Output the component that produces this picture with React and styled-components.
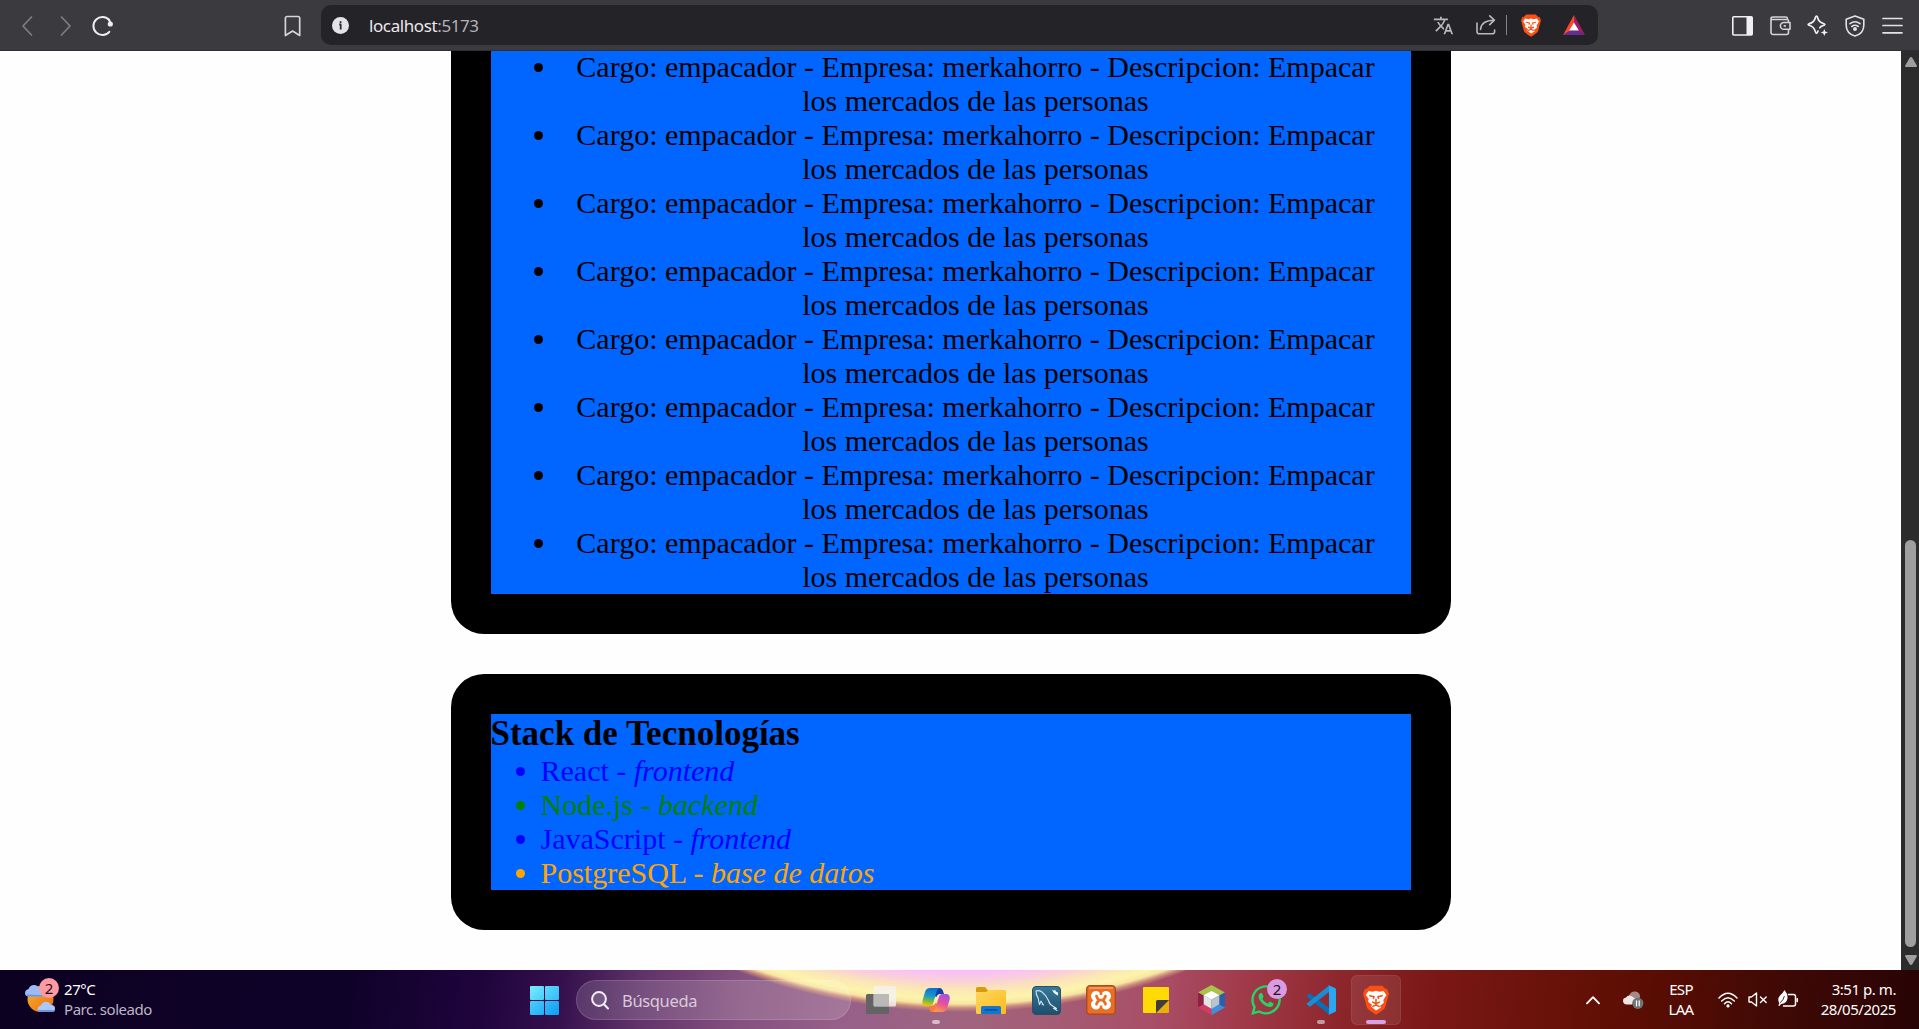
import React from "react";
import styled, { createGlobalStyle } from "styled-components";
import { FaWhatsapp } from "react-icons/fa";
import { MdTranslate } from "react-icons/md";

const uiFont = '"Noto Sans", "Open Sans", sans-serif';
const pageFont = '"Liberation Serif", "Times New Roman", serif';

const GlobalStyle = createGlobalStyle`
  * { box-sizing: border-box; }
  html, body { margin: 0; padding: 0; background: #fff; overflow: hidden; }
`;

const Screen = styled.div`
  display: flex;
  flex-direction: column;
  width: 1919px;
  height: 1029px;
  overflow: hidden;
`;

/* ---------- Browser toolbar ---------- */

const Toolbar = styled.header`
  display: flex;
  align-items: flex-start;
  flex: none;
  height: 51px;
  background: #3b3a3f;
  border-bottom: 1px solid #2f2e32;
  font-family: ${uiFont};
`;

const NavGroup = styled.nav`
  display: flex;
  align-items: center;
  width: 321px;
  height: 51px;
  padding-left: 19px;
`;

const NavSlot = styled.span`
  display: flex;
  width: ${(p) => p.$w}px;
`;

const Icon = styled.svg`
  display: block;
  flex: none;
  width: ${(p) => p.$w}px;
  height: ${(p) => p.$h}px;
  overflow: visible;
  fill: ${(p) => p.$fill || "none"};
  stroke: ${(p) => p.$stroke || "none"};
  stroke-width: ${(p) => p.$sw || 1.5};
  stroke-linecap: round;
  stroke-linejoin: round;
`;

const AddressBar = styled.div`
  display: flex;
  align-items: center;
  width: 1277px;
  height: 40px;
  margin-top: 5px;
  padding: 0 13px 0 11px;
  border-radius: 10px;
  background: #242328;
`;

const Url = styled.span`
  flex: 1;
  margin-left: 20px;
  color: #e9e8ec;
  font-size: 17px;
  line-height: 39px;
  letter-spacing: -0.4px;
`;

const Port = styled.span`
  color: #b3b2b8;
`;

const AddressActions = styled.div`
  display: flex;
  align-items: center;
  color: #b9b8bd;
`;

const Divider = styled.i`
  width: 1px;
  height: 20px;
  margin: 0 14px 0 10px;
  background: #85848a;
`;

const Gap = styled.span`
  width: ${(p) => p.$w}px;
`;

const ToolGroup = styled.div`
  display: flex;
  height: 51px;
  margin-left: 126px;
`;

const ToolCell = styled.span`
  display: flex;
  align-items: center;
  justify-content: center;
  width: 37.5px;
`;

/* ---------- Page ---------- */

const Viewport = styled.div`
  display: flex;
  flex: none;
  height: 919px;
  overflow: hidden;
`;

const Page = styled.main`
  display: flex;
  flex: 1;
  flex-direction: column;
  justify-content: flex-end;
  align-items: center;
  gap: 40px;
  padding-bottom: 40px;
  background: #fefefe;
  font-family: ${pageFont};
  font-size: 30px;
  line-height: 34px;
  color: #000;
`;

const Card = styled.section`
  flex: none;
  width: 1000px;
  border: 40px solid #000;
  border-radius: 33px;
  background: #0066ff;
`;

const List = styled.ul`
  margin: 0;
  padding: 0 0 0 50px;
  text-align: ${(p) => (p.$centered ? "center" : "left")};
`;

const Job = styled.li`
  margin: 0 18px;
`;

const Tech = styled.li`
  color: ${(p) => p.$color};
`;

const Heading = styled.h2`
  margin: 0;
  font-size: 35px;
  line-height: 40px;
  font-weight: bold;
`;

const ScrollTrack = styled.div`
  display: flex;
  flex-direction: column;
  align-items: center;
  width: 18px;
  padding: 6px 0 5px 1px;
  background: #2c2c2c;
`;

const ScrollThumb = styled.div`
  width: 11px;
  height: 407px;
  margin: auto 0 8px;
  border-radius: 6px;
  background: #9f9f9f;
`;

/* ---------- Taskbar ---------- */

const Taskbar = styled.footer`
  display: flex;
  align-items: center;
  flex: none;
  height: 59px;
  font-family: ${uiFont};
  color: #fff;
  background:
    radial-gradient(circle at 962px -595px,
      #f8bdfb 0, #f9c0f8 597px, #fad0d8 606px, #fbe5b8 614px, #fdf4ab 624px,
      #f8e5a2 629px, #c98a7c 633px, rgba(176, 104, 120, 0) 637px),
    linear-gradient(97deg,
      #0d0122 0, #0f0229 350px, #1f043c 480px, #35104d 560px, #61336a 640px,
      #85517f 740px, #96608a 840px, #a0647f 960px, #a45c74 1050px, #a94e68 1150px,
      #a03a49 1240px, #8e272d 1330px, #7c1817 1420px, #6c130c 1520px,
      #5a0d02 1640px, #430a05 1750px, #310505 1860px, #240305 1925px);
`;

const Weather = styled.div`
  display: flex;
  align-items: center;
  width: 530px;
  padding-left: 25px;
`;

const WeatherArt = styled.div`
  position: relative;
  width: 39px;
  height: 36px;
  margin-bottom: 8px;
`;

const Badge = styled.span`
  position: absolute;
  top: ${(p) => p.$top}px;
  left: ${(p) => p.$left}px;
  width: 20px;
  height: 20px;
  border-radius: 50%;
  background: ${(p) => p.$bg};
  color: #1c1014;
  font-size: 15px;
  line-height: 20px;
  text-align: center;
`;

const Stack = styled.div`
  display: flex;
  flex-direction: column;
  align-items: ${(p) => p.$align || "flex-start"};
  width: ${(p) => (p.$w ? `${p.$w}px` : "auto")};
  margin-bottom: 2px;
  font-size: 15px;
  line-height: 20px;
  letter-spacing: ${(p) => p.$ls || -0.45}px;
  white-space: nowrap;
`;

const Muted = styled.span`
  color: #bdb6c6;
`;

const StartButton = styled.span`
  display: grid;
  grid-template-columns: 14px 14px;
  gap: 1px;
  margin: 2px 17px 0 0;
`;

const Pane = styled.i`
  height: 14px;
  border-radius: 1px;
  background: linear-gradient(135deg, ${(p) => p.$from}, ${(p) => p.$to});
`;

const Search = styled.div`
  display: flex;
  align-items: center;
  width: 275px;
  height: 40px;
  margin-top: 1px;
  padding-left: 14px;
  gap: 13px;
  border: 1px solid rgba(255, 255, 255, 0.14);
  border-radius: 20px;
  background: rgba(255, 255, 255, 0.14);
  color: #d9cadb;
  font-size: 16.5px;
  letter-spacing: -0.35px;
`;

const Apps = styled.div`
  display: flex;
  gap: 5px;
  margin-left: 5px;
`;

const AppButton = styled.div`
  position: relative;
  display: flex;
  align-items: center;
  justify-content: center;
  width: 50px;
  height: 50px;
  margin-top: 1px;
  border-radius: 6px;
  background: ${(p) => (p.$active ? "rgba(255,255,255,0.09)" : "transparent")};
  box-shadow: ${(p) => (p.$active ? "inset 0 0 0 1px rgba(255,255,255,0.07)" : "none")};
`;

const Indicator = styled.i`
  position: absolute;
  bottom: 1px;
  left: ${(p) => 25 - p.$w / 2}px;
  width: ${(p) => p.$w}px;
  height: 4px;
  border-radius: 2px;
  background: ${(p) => p.$bg};
`;

const Tray = styled.div`
  display: flex;
  align-items: center;
  flex: 1;
  padding-left: 185px;
`;

const WhatsApp = styled(FaWhatsapp)`
  width: 34px;
  height: 34px;
  color: #25d366;
`;

const Translate = styled(MdTranslate)`
  width: 21px;
  height: 21px;
  margin-right: 22px;
`;

function Lion({ w, h }) {
  return (
    <Icon $w={w} $h={h} viewBox="0 0 20 24" preserveAspectRatio="none">
      <path fill="#fb4f14" d="M5.2.6h9.6l2.4 2.4 1.2-.1L20 6.8l-.7 2.3L17 18Q16.5 19.5 10 23.8 3.5 19.5 3 18L.7 9.1 0 6.8l1.6-3.9 1.2.1z" />
      <path fill="#fff" d="M4.2 4.7l3.2.7 2.6-.8 2.6.8 3.2-.7 2.2 3.2-2.4 4 .5 2.2-3.2 2.6 1 1.2L10 20.4l-3.9-3.2 1-1.2-3.2-2.6.5-2.2L2.2 7.9z" />
      <path stroke="#fb4f14" strokeWidth="1.2" d="M5.2 8.6l3.3.8-.4 1.3M14.8 8.6l-3.3.8.4 1.3M10 11.4v2.6M7.4 13.7L10 15l2.6-1.3M7.6 17.1L10 16l2.4 1.1" />
    </Icon>
  );
}

const jobs = Array.from({ length: 8 }, () => ({
  cargo: "empacador",
  empresa: "merkahorro",
  descripcion: "Empacar los mercados de las personas",
}));

const techs = [
  { name: "React", kind: "frontend", color: "blue" },
  { name: "Node.js", kind: "backend", color: "green" },
  { name: "JavaScript", kind: "frontend", color: "blue" },
  { name: "PostgreSQL", kind: "base de datos", color: "orange" },
];

function BrowserToolbar() {
  return (
    <Toolbar>
      <NavGroup>
        <NavSlot $w={40}>
          <Icon $w={16} $h={20} viewBox="0 0 16 20" $stroke="#7f7e83" $sw={1.7}><path d="M12.5 1L4 10l8.500 9" /></Icon>
        </NavSlot>
        <NavSlot $w={33}>
          <Icon $w={16} $h={20} viewBox="0 0 16 20" $stroke="#7f7e83" $sw={1.7}><path d="M2.5 1L11 10l-8.500 9" /></Icon>
        </NavSlot>
        <NavSlot $w={192}>
          <Icon $w={22} $h={22} viewBox="0 0 22 22" $stroke="#ededf0" $sw={2}>
            <path d="M17.3 16.8A9 9 0 1 1 17.3 5.2" />
            <circle cx="18.3" cy="9" r="2.6" fill="#ededf0" stroke="none" />
            <path d="M16.5 4.3l1.8 3" />
          </Icon>
        </NavSlot>
        <Icon $w={17} $h={22} viewBox="0 0 17 22" $stroke="#d5d4d8" $sw={1.7}><path d="M3 1.5h11a1.7 1.7 0 0 1 1.7 1.7v17.3L8.600 16l-7.200 4.500V3.200A1.700 1.700 0 0 1 3 1.500z" /></Icon>
      </NavGroup>
      <AddressBar>
        <Icon $w={17} $h={17} viewBox="0 0 17 17">
          <circle cx="8.5" cy="8.5" r="8.5" fill="#e4e3e8" />
          <path stroke="#2b2a2f" strokeWidth="1.8" strokeLinecap="butt" d="M7.2 7.4h1.500v5M8.600 4.200v1.900" />
        </Icon>
        <Url>localhost<Port>:5173</Port></Url>
        <AddressActions>
          <Translate />
          <Icon $w={20} $h={20} viewBox="0 0 20 20" $stroke="#b9b8bd" $sw={1.6}>
            <path d="M1 8v8.500A2.300 2.300 0 0 0 3.300 18.800h13a2.300 2.300 0 0 0 2.300-2.300V15M4.500 14.500C5 8 9.500 5.200 18 5.200M13.700.8L18.400 5.200l-4.700 4.400" />
          </Icon>
          <Divider />
          <Lion w={20} h={23} />
          <Gap $w={22} />
          <Icon $w={22} $h={20} viewBox="0 0 22 20">
            <path fill="#ff4724" d="M11 0L0 20l7-4 4-8z" />
            <path fill="#9e1f63" d="M11 0l11 20-7-4-4-8z" />
            <path fill="#662d91" d="M0 20h22l-7-4.5H7z" />
            <path fill="#fff" d="M11 7.6l4.800 8H6.200z" />
          </Icon>
        </AddressActions>
      </AddressBar>
      <ToolGroup>
        <ToolCell>
          <Icon $w={21} $h={20} viewBox="0 0 21 20"><rect x=".8" y=".8" width="19.4" height="18.2" rx="1" stroke="#f0eff2" strokeWidth="1.6" /><path fill="#f0eff2" d="M14.500 1H20v18h-5.500z" /></Icon>
        </ToolCell>
        <ToolCell>
          <Icon $w={21} $h={20} viewBox="0 0 21 20" $stroke="#d5d4d8" $sw={1.6}>
            <path d="M18.500 5.500V4.800A1.500 1.500 0 0 0 17 3.500H2.500Q1 3.500 1 2.500 1 1 3 1h12.500q1.800 0 2 1.500M1 2.500v14A2.200 2.200 0 0 0 3.200 18.500H16.500a2 2 0 0 0 2-2V14M20 6.500h-6.200a3.400 3.400 0 0 0 0 6.800H20zM14.300 9.900h1" />
          </Icon>
        </ToolCell>
        <ToolCell>
          <Icon $w={21} $h={21} viewBox="0 0 21 21" $stroke="#f0eff2" $sw={1.7}>
            <path d="M9.500 1Q10.300 1 10.600 2.500 11.500 7.200 17 8.800q1.700.7 0 1.500-3 .8-4.200 2.400M9.500 1Q8.800 1 8.400 2.500 7.300 7.500 2 8.800q-1.700.7 0 1.500 5 1.400 6.400 6.500.4 1.500 1.100 1.500.9 0 1.500-2.300" />
            <path fill="#f0eff2" stroke="none" d="M17.300 14l1 2.500 2.700 1-2.700 1-1 2.500-1-2.500-2.600-1 2.600-1z" />
          </Icon>
        </ToolCell>
        <ToolCell>
          <Icon $w={20} $h={22} viewBox="0 0 20 22" $stroke="#e3e2e6" $sw={1.6}>
            <path d="M10 1l8.800 3.200v6C18.800 16 15 19.500 10 21 5 19.500 1.200 16 1.200 10.200v-6zM5 8.700q5-3.800 10 0M6.800 11.500q3.200-2.400 6.400 0" />
            <circle cx="10" cy="14" r="1.200" fill="#e3e2e6" />
          </Icon>
        </ToolCell>
        <ToolCell>
          <Icon $w={21} $h={17} viewBox="0 0 21 17" $stroke="#e3e2e6" $sw={1.7}><path d="M1 1.500h19M1 8.500h19M1 15.800h19" /></Icon>
        </ToolCell>
      </ToolGroup>
    </Toolbar>
  );
}

function TaskbarApps() {
  return (
    <Apps>
      <AppButton>
        <Icon $w={30} $h={28} viewBox="0 0 30 28">
          <rect x="0" y="8" width="23" height="20" rx="1.5" fill="#636363" />
          <rect x="7.5" y="0" width="22.5" height="20.5" rx="1.5" fill="#f4f2ee" fillOpacity=".82" />
          <path d="M7.500 8H23v12.500H7.500z" fill="#a5a5a5" fillOpacity=".6" />
        </Icon>
      </AppButton>
      <AppButton>
        <Icon $w={28} $h={26} viewBox="0 0 28 26">
          <defs>
            <linearGradient id="cpA" x1=".5" y1="0" x2=".3" y2="1"><stop offset="0" stopColor="#0f6fd0" /><stop offset=".45" stopColor="#199ac9" /><stop offset=".7" stopColor="#6cb84a" /><stop offset="1" stopColor="#f5c400" /></linearGradient>
            <linearGradient id="cpB" x1=".7" y1="0" x2=".3" y2="1"><stop offset="0" stopColor="#a64fe6" /><stop offset=".5" stopColor="#e8509a" /><stop offset="1" stopColor="#fd9a4a" /></linearGradient>
          </defs>
          <path fill="#123fae" d="M13 1h5q2 0 2.800 2.500L22 7h-4q-2.500 0-3.500 3L12 9z" />
          <path fill="#f9793e" d="M15 25h-5q-2 0-2.600-2.500L7 19h3q2.500 0 3.500-3l3 1z" />
          <path fill="url(#cpA)" d="M8 1h10q-2.500.5-3.500 4l-3 10q-1 4-4 4H4q-4.500 0-3.500-5.500L3 5Q4.200 1 8 1z" />
          <path fill="url(#cpB)" d="M20 25H10q2.500-.5 3.500-4l3-10q1-4 4-4H24q4.500 0 3.700 5.500L25 21q-1.200 4-5 4z" />
        </Icon>
        <Indicator $w={8} $bg="#d7b9ca" />
      </AppButton>
      <AppButton>
        <Icon $w={30} $h={27} viewBox="0 0 30 27">
          <defs><linearGradient id="fd" x1="0" y1="0" x2="1" y2="1"><stop offset="0" stopColor="#ffd75e" /><stop offset="1" stopColor="#fbbb1d" /></linearGradient></defs>
          <path fill="#d79b0b" d="M1.500 0H9l3 3.500V8H0V1.500Q0 0 1.500 0z" />
          <path fill="url(#fd)" d="M0 5h10l3-2h15.500Q30 3 30 4.500v21q0 1.500-1.500 1.500h-27Q0 27 0 25.500z" />
          <path fill="#1277d0" d="M5 27v-6.500q0-1.500 1.500-1.500h17q1.500 0 1.500 1.500V27z" />
          <path stroke="#0a4687" strokeWidth="1.3" d="M9 22.800h12" />
        </Icon>
      </AppButton>
      <AppButton>
        <Icon $w={29} $h={29} viewBox="0 0 29 29">
          <defs><linearGradient id="my" x1="0" y1="0" x2="0" y2="1"><stop offset="0" stopColor="#377999" /><stop offset="1" stopColor="#1e4d6c" /></linearGradient></defs>
          <rect x=".5" y=".5" width="28" height="28" rx="3.5" fill="url(#my)" stroke="#28506b" strokeWidth="1" />
          <path stroke="#d4e2ea" strokeWidth="1.1" d="M10 18l1.500 1M7.500 18.500Q6.500 15 6.300 12.500 3.800 8.500 4 5q3-1 6 1 4.500 3.500 6.500 8.500 1 4 3.500 5l4.500 3-3-.3 3.500 2.300M7.500 18.500L9 15l2.500 4" />
          <path fill="#eef5f8" d="M20 3.500l2 1.200 1-1.200.8 2 2.200 1V9.500l-2.500-1.300-2-1.800z" />
        </Icon>
      </AppButton>
      <AppButton>
        <Icon $w={30} $h={30} viewBox="0 0 30 30">
          <rect x=".7" y=".7" width="28.6" height="28.6" rx="3.5" fill="#eb6e22" stroke="#a94c20" strokeWidth="1.4" />
          <path fill="#f7a878" fillOpacity=".7" d="M3 2h24v2H3z" />
          <path stroke="#fff" strokeWidth="10" d="M10 11L20 19.500M20 11L10 19.500" />
          <path stroke="#eb6e22" strokeWidth="2.8" d="M10.500 11.200q1 3.300 3 4-2 .7-3 4M19.500 11.200q-1 3.300-3 4 2 .7 3 4M13 15.200h4" />
          <path fill="#eb6e22" d="M13.700 5h2.600v5h-2.600zM13.700 20.500h2.600v5h-2.600z" />
        </Icon>
      </AppButton>
      <AppButton>
        <Icon $w={26} $h={26} viewBox="0 0 26 26">
          <path fill="#ffdb05" d="M1 0h24q1 0 1 1v12L13 26H1q-1 0-1-1V1q0-1 1-1z" />
          <path fill="#e8ae09" d="M13 26L26 13v12q0 1-1 1z" />
          <path fill="#3d3d3d" d="M14.500 13H26L13 26V14.500q0-1.500 1.500-1.500z" />
        </Icon>
      </AppButton>
      <AppButton>
        <Icon $w={27} $h={30} viewBox="0 0 27 30">
          <path fill="#a9c24b" d="M13.500 0L27 7.500l-6.500 3.500-7-3.500-7 3.500L0 7.500z" />
          <path fill="#8e2047" d="M0 7.500L6.500 11v8L0 22.500z" />
          <path fill="#d43a66" d="M0 22.500L6.500 19l7 3.800V30z" />
          <path fill="#3f8fdc" d="M13.500 30v-7.200l7-3.800L27 22.500z" />
          <path fill="#2a5fae" d="M27 7.500v15L20.500 19v-8z" />
          <path fill="#fff" d="M13.500 6l7.800 4.300-7.800 4.500-7.800-4.500z" />
          <path fill="#dfe7e2" d="M5.700 10.300l7.800 4.500v9L5.700 19.300z" />
          <path fill="#b9c5cc" d="M21.300 10.300l-7.800 4.500v9l7.800-4.500z" />
        </Icon>
      </AppButton>
      <AppButton>
        <WhatsApp />
        <Badge $top={4} $left={26} $bg="#d99be3">2</Badge>
      </AppButton>
      <AppButton>
        <Icon $w={30} $h={30} viewBox="0 0 30 30">
          <path fill="#0b6fb8" d="M1 10.500l2-1.700q.7-.5 1.500 0L23 23v6.500L1 11.800q-.7-.7 0-1.300z" />
          <path fill="#178fd6" d="M1 19.500l2 1.700q.7.5 1.500 0L23 7V.5L1 18.200q-.7.7 0 1.300z" />
          <path fill="#2aa7f0" d="M22 0l7 3q1 .5 1 1.500v21q0 1-1 1.500l-7 3q1-.5 1-2V2q0-1.500-1-2z" />
        </Icon>
        <Indicator $w={8} $bg="#c39a9f" />
      </AppButton>
      <AppButton $active>
        <Lion w={26} h={30} />
        <Indicator $w={20} $bg="#dba1e6" />
      </AppButton>
    </Apps>
  );
}

function TaskbarTray() {
  return (
    <Tray>
      <Icon $w={14} $h={8} viewBox="0 0 14 8" $stroke="#fff" $sw={1.9}><path d="M1 7.300L7 1.200l6 6.100" /></Icon>
      <Gap $w={23} />
      <Icon $w={21} $h={18} viewBox="0 0 21 18">
        <path fill="#a38a88" d="M6 4.500Q8 0 12.500.5 16.500 1.200 17 5q0 4-4 6z" />
        <path fill="#f2e6e5" d="M4 13.500Q0 13.500 0 9.800 0 7 3 6.500 5 3.500 8.500 5q2 1.500 4.500 3L9 13.500z" />
        <circle cx="14.800" cy="12.300" r="5.600" fill="#6f7577" />
        <path stroke="#fff" strokeWidth="1.2" d="M13.500 9.800v5M16.200 9.800v5" />
      </Icon>
      <Gap $w={22} />
      <Stack $w={30} $align="center" $ls={-0.7}>
        <span>ESP</span>
        <span>LAA</span>
      </Stack>
      <Gap $w={22} />
      <Icon $w={20} $h={16} viewBox="0 0 20 16" $stroke="#fff" $sw={1.5}>
        <path d="M1 6Q10-3.500 19 6M3.700 9Q10 2.300 16.300 9M6.500 11.700Q10 8 13.500 11.700" />
        <circle cx="10" cy="13.900" r="1.600" fill="#fff" stroke="none" />
      </Icon>
      <Gap $w={10} />
      <Icon $w={19} $h={15} viewBox="0 0 19 15" $stroke="#fff" $sw={1.4}>
        <path d="M1 5h2.500L8.500 1v13L3.500 10H1zM12.500 5l5.700 5.500M18.200 5l-5.700 5.500" />
      </Icon>
      <Gap $w={11} />
      <Icon $w={20} $h={20} viewBox="0 0 20 20" $stroke="#fff" $sw={1.5}>
        <path d="M10.500 4.500h5q2 0 2 2v7.500q0 2-2 2H5.500M19.300 8.700v2.800" />
        <path fill="#fff" stroke="none" d="M6.500 0Q10 4 9.500 8.500 8.500 13.500 3 14L1.500 16 .3 15.400l1-2.200Q-1 9 2 5.500 5 3 6.500 0z" />
        <path stroke="#430a06" strokeWidth=".9" d="M2.500 12.500Q5.500 10 6.300 6.500" />
      </Icon>
      <Gap $w={16} />
      <Stack $w={82} $align="flex-end">
        <span>3:51 p. m.</span>
        <span>28/05/2025</span>
      </Stack>
    </Tray>
  );
}

export default function App() {
  return (
    <Screen>
      <GlobalStyle />
      <BrowserToolbar />
      <Viewport>
        <Page>
          <Card>
            <List $centered>
              {jobs.map((j, i) => (
                <Job key={i}>
                  {`Cargo: ${j.cargo} - Empresa: ${j.empresa} - Descripcion: ${j.descripcion}`}
                </Job>
              ))}
            </List>
          </Card>
          <Card>
            <Heading>Stack de Tecnologías</Heading>
            <List>
              {techs.map((t) => (
                <Tech key={t.name} $color={t.color}>
                  {`${t.name} - `}<em>{t.kind}</em>
                </Tech>
              ))}
            </List>
          </Card>
        </Page>
        <ScrollTrack>
          <Icon $w={12} $h={10} viewBox="0 0 12 10" $fill="#9f9f9f"><path d="M6 0q.8 0 1.300.8L11.800 8.500Q12.300 10 11 10H1Q-.3 10 .2 8.500L4.700.8Q5.200 0 6 0z" /></Icon>
          <ScrollThumb />
          <Icon $w={12} $h={10} viewBox="0 0 12 10" $fill="#9f9f9f"><path d="M6 10q.8 0 1.300-.8L11.800 1.500Q12.300 0 11 0H1Q-.3 0 .2 1.500L4.700 9.200Q5.200 10 6 10z" /></Icon>
        </ScrollTrack>
      </Viewport>
      <Taskbar>
        <Weather>
          <WeatherArt>
            <Icon $w={34} $h={36} viewBox="0 0 34 36">
              <defs><linearGradient id="sun" x1="0" y1="0" x2="1" y2="1"><stop offset="0" stopColor="#f7b52c" /><stop offset="1" stopColor="#ee6a10" /></linearGradient></defs>
              <circle cx="15.500" cy="21" r="13" fill="url(#sun)" />
              <path fill="#9dbcf5" d="M3 18.500Q0 18 0 15t3.500-4Q5 7 9 7q3.500 0 5 3l4 8.500z" />
              <path fill="#a9c8fb" d="M15 34q-2.500-.5-2.500-3t3-3.300q2-4 5.500-4 3.500 0 5 3.300 4-.2 4 3.500 0 3-2.500 3.500z" />
              <path fill="#6f93dc" d="M1 16.500q1 2 3 2h13.500l-.7-1.500zM13 32q.5 2 2.500 2h12q2 0 2.500-2z" />
            </Icon>
            <Badge $top={0} $left={14} $bg="#ff99a4">2</Badge>
          </WeatherArt>
          <Stack>
            <span>27°C</span>
            <Muted>Parc. soleado</Muted>
          </Stack>
        </Weather>
        <StartButton>
          <Pane $from="#7cecfd" $to="#45cdfb" />
          <Pane $from="#5fdafc" $to="#2fbcf9" />
          <Pane $from="#4dcffb" $to="#1fadf8" />
          <Pane $from="#33bdfa" $to="#0d9bf5" />
        </StartButton>
        <Search>
          <Icon $w={18} $h={19} viewBox="0 0 18 19" $stroke="#f3edf4" $sw={2}><circle cx="8" cy="8" r="6.900" fill="rgba(255,255,255,.12)" /><path d="M13 13.200l4 4.300" /></Icon>
          Búsqueda
        </Search>
        <TaskbarApps />
        <TaskbarTray />
      </Taskbar>
    </Screen>
  );
}
